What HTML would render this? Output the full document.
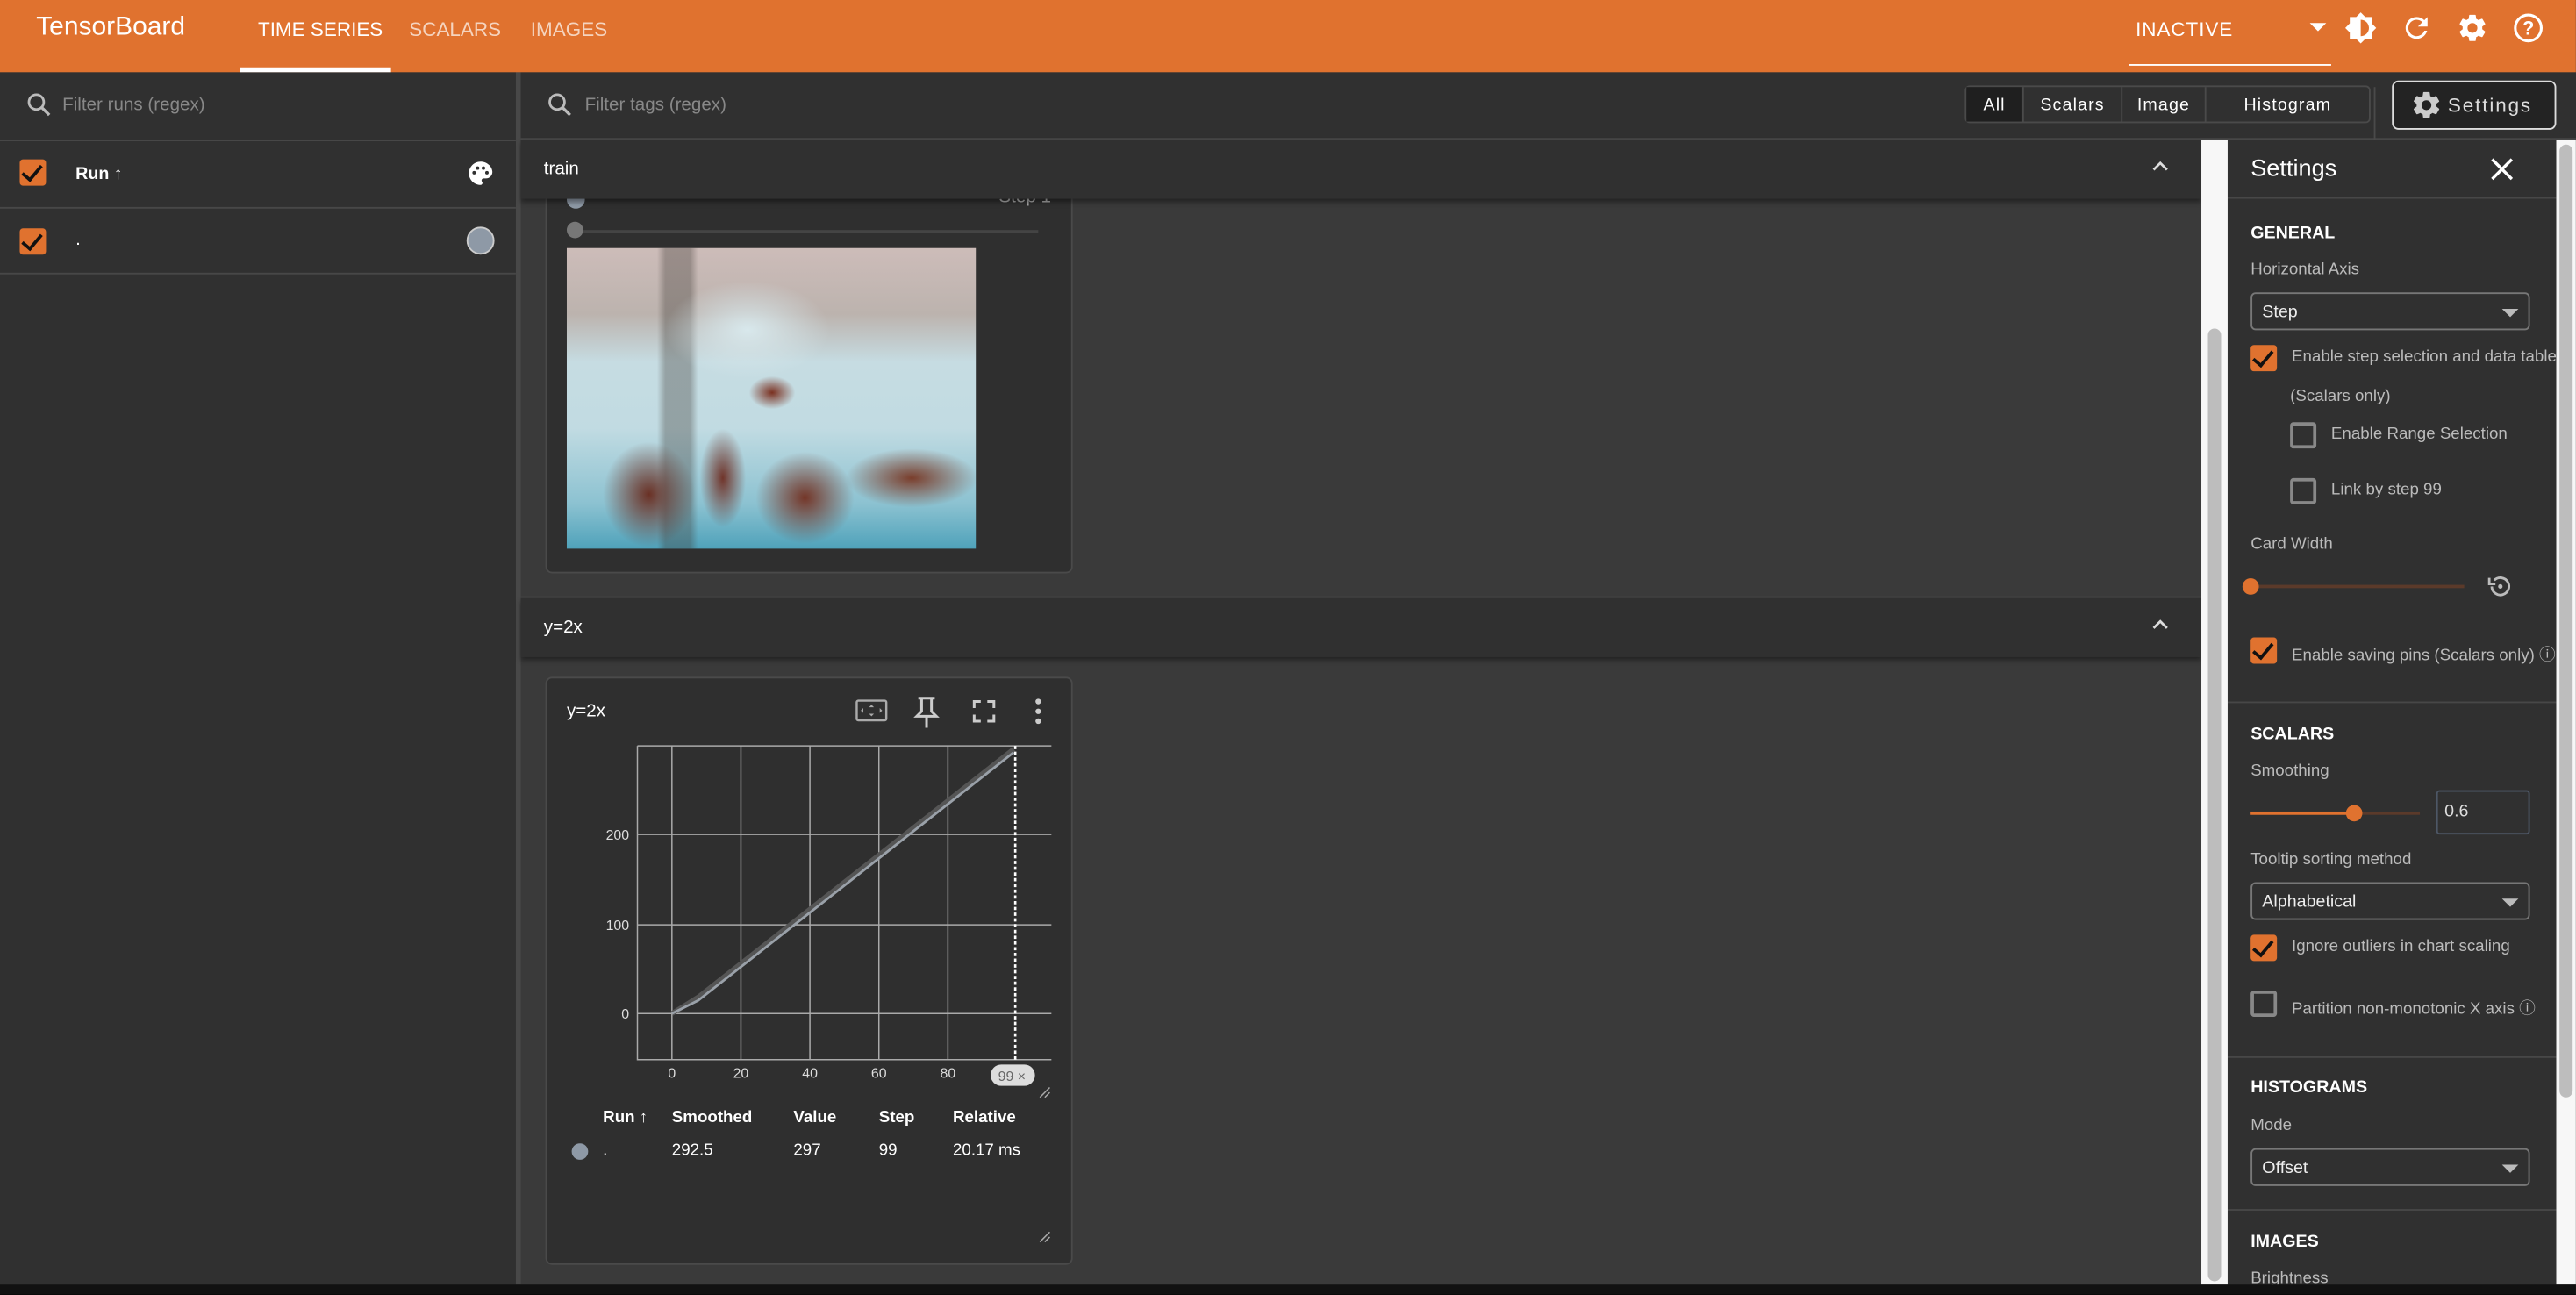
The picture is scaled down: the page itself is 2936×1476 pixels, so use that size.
<!DOCTYPE html>
<html><head><meta charset="utf-8"><style>
*{box-sizing:border-box;margin:0;padding:0}
html,body{width:2936px;height:1476px;overflow:hidden;background:#000}
#s{position:absolute;left:0;top:0;width:1568px;height:788px;transform:scale(1.8724);transform-origin:0 0;font-family:"Liberation Sans",sans-serif;color:#fff;background:#3a3a3a;overflow:hidden}
.a{position:absolute}
.hdr{left:0;top:0;width:1568px;height:44px;background:#e0722f}
.t{font-size:12px;white-space:nowrap}
.g{color:#aaa}
.cb{position:absolute;width:16px;height:16px;background:#e0722f;border-radius:2px}
.cb:after{content:"";position:absolute;left:4px;top:1px;width:5px;height:10px;border:solid #111;border-width:0 2px 2px 0;transform:rotate(40deg)}
.ub{position:absolute;width:16px;height:16px;border:2px solid #888;border-radius:2px}
.sel{position:absolute;border:1px solid #777;border-radius:3px;height:23px;width:170px;font-size:10.5px;padding:5px 6px;color:#eee}
.sel:after{content:"";position:absolute;right:6px;top:9px;border:5px solid transparent;border-top-color:#bbb}
.sh{font-size:10.5px;font-weight:bold;color:#fff}
.sl{font-size:10px;color:#bbb}
.line{position:absolute;background:#474747;height:1px}
</style></head><body><div id="s">
<div class="a hdr"></div>
<div class="a" style="left:22px;top:8px;font-size:16px">TensorBoard</div>
<div class="a t" style="left:157px;top:11px">TIME SERIES</div>
<div class="a t" style="left:249px;top:11px;color:#f5d4bf">SCALARS</div>
<div class="a t" style="left:323px;top:11px;color:#f5d4bf">IMAGES</div>
<div class="a" style="left:146px;top:41px;width:92px;height:3px;background:#fff"></div>
<div class="a t" style="left:1300px;top:11px;letter-spacing:.5px">INACTIVE</div>
<div class="a" style="left:1296px;top:39px;width:123px;height:1px;background:#fff"></div>
<div class="a" style="left:1406px;top:14px;border:5px solid transparent;border-top-color:#fff"></div>
<svg class="a" style="left:1427px;top:7px" width="20" height="20" viewBox="0 0 24 24"><path fill="#fff" d="M20 8.69V4h-4.69L12 .69 8.69 4H4v4.69L.69 12 4 15.31V20h4.69L12 23.31 15.31 20H20v-4.69L23.31 12 20 8.69zM12 18V6c3.31 0 6 2.69 6 6s-2.69 6-6 6z"/></svg>
<svg class="a" style="left:1461px;top:7px" width="20" height="20" viewBox="0 0 24 24"><path fill="#fff" d="M17.65 6.35A7.96 7.96 0 0 0 12 4a8 8 0 1 0 7.73 10h-2.08A6 6 0 1 1 12 6c1.66 0 3.14.69 4.22 1.78L13 11h7V4l-2.35 2.35z"/></svg>
<svg class="a" style="left:1495px;top:7px" width="20" height="20" viewBox="0 0 24 24"><path fill="#fff" d="M19.14 12.94a7.5 7.5 0 0 0 0-1.880l2.03-1.58a.5.5 0 0 0 .12-.61l-1.92-3.32a.5.5 0 0 0-.59-.22l-2.39.96a7 7 0 0 0-1.62-.94l-.36-2.54a.5.5 0 0 0-.48-.41h-3.840a.5.5 0 0 0-.47.41l-.36 2.54c-.59.24-1.13.57-1.62.94l-2.39-.96a.5.5 0 0 0-.59.22L2.74 8.87a.5.5 0 0 0 .12.61l2.03 1.58a7.5 7.5 0 0 0 0 1.88l-2.03 1.58a.5.5 0 0 0-.12.61l1.92 3.32c.12.22.37.29.59.22l2.39-.96c.5.38 1.03.7 1.62.94l.36 2.54c.05.24.24.41.48.41h3.84c.24 0 .44-.17.47-.41l.36-2.54c.59-.24 1.13-.56 1.62-.94l2.39.96c.22.08.47 0 .59-.22l1.92-3.32a.5.5 0 0 0-.12-.61l-2.01-1.58zM12 15.6a3.6 3.6 0 1 1 0-7.2 3.6 3.6 0 0 1 0 7.2z"/></svg>
<svg class="a" style="left:1529px;top:7px" width="20" height="20" viewBox="0 0 24 24"><circle cx="12" cy="12" r="9.5" fill="none" stroke="#fff" stroke-width="2"/><text x="12" y="17" text-anchor="middle" font-size="14" font-family="Liberation Sans" font-weight="bold" fill="#fff">?</text></svg>

<!-- left panel -->
<div class="a" style="left:0;top:44px;width:314px;height:738px;background:#303030"></div>
<div class="a" style="left:314px;top:44px;width:3px;height:738px;background:#484848"></div>
<svg class="a" style="left:15px;top:55px" width="18" height="18" viewBox="0 0 24 24"><circle cx="9.5" cy="9.5" r="6" fill="none" stroke="#bbb" stroke-width="2"/><path d="M14 14l6 6" stroke="#bbb" stroke-width="2.4"/></svg>
<div class="a t g" style="left:38px;top:58px;font-size:11px;color:#888">Filter runs (regex)</div>
<div class="line" style="left:0;top:85px;width:314px"></div>
<div class="cb" style="left:12px;top:97px"></div>
<div class="a" style="left:46px;top:100px;font-size:10.5px;font-weight:bold">Run ↑</div>
<svg class="a" style="left:284px;top:97px" width="17" height="17" viewBox="0 0 24 24"><path fill="#fff" d="M12 2C6.5 2 2 6.5 2 12s4.5 10 10 10c.9 0 1.7-.8 1.7-1.7 0-.4-.2-.8-.4-1.1-.3-.3-.4-.7-.4-1.1 0-.9.8-1.7 1.7-1.7h2c3.1 0 5.6-2.5 5.6-5.6C22 6 17.5 2 12 2zM6.5 13a1.5 1.5 0 1 1 0-3 1.5 1.5 0 0 1 0 3zm3-4a1.5 1.5 0 1 1 0-3 1.5 1.5 0 0 1 0 3zm5 0a1.5 1.5 0 1 1 0-3 1.5 1.5 0 0 1 0 3zm3 4a1.5 1.5 0 1 1 0-3 1.5 1.5 0 0 1 0 3z"/></svg>
<div class="line" style="left:0;top:126px;width:314px"></div>
<div class="cb" style="left:12px;top:139px"></div>
<div class="a" style="left:46px;top:140px;font-size:11px">.</div>
<div class="a" style="left:284px;top:138px;width:17px;height:17px;border-radius:50%;background:#8e99a6;border:1px solid #ccc"></div>
<div class="line" style="left:0;top:166px;width:314px"></div>

<!-- filter bar -->
<div class="a" style="left:317px;top:44px;width:1251px;height:41px;background:#303030;border-bottom:1px solid #474747"></div>
<svg class="a" style="left:332px;top:55px" width="18" height="18" viewBox="0 0 24 24"><circle cx="9.5" cy="9.5" r="6" fill="none" stroke="#bbb" stroke-width="2"/><path d="M14 14l6 6" stroke="#bbb" stroke-width="2.4"/></svg>
<div class="a t" style="left:356px;top:58px;font-size:11px;color:#888">Filter tags (regex)</div>
<div class="a" style="left:1196px;top:52px;width:247px;height:23px;border:1px solid #4a4a4a;border-radius:3px;display:flex;font-size:10.5px;letter-spacing:.6px">
<div style="width:34px;background:#1f1f1f;text-align:center;padding-top:5px">All</div>
<div style="width:60px;border-left:1px solid #4a4a4a;text-align:center;padding-top:5px">Scalars</div>
<div style="width:51px;border-left:1px solid #4a4a4a;text-align:center;padding-top:5px">Image</div>
<div style="flex:1;border-left:1px solid #4a4a4a;text-align:center;padding-top:5px">Histogram</div></div>
<div class="a" style="left:1445px;top:53px;width:1px;height:32px;background:#4a4a4a"></div>
<div class="a" style="left:1456px;top:49px;width:100px;height:30px;border:1px solid #ddd;border-radius:4px;background:#232323"></div>
<svg class="a" style="left:1467px;top:54px" width="20" height="20" viewBox="0 0 24 24"><path fill="#ccc" d="M19.14 12.94a7.5 7.5 0 0 0 0-1.88l2.03-1.58a.5.5 0 0 0 .12-.61l-1.920-3.32a.5.5 0 0 0-.59-.22l-2.39.96a7 7 0 0 0-1.62-.94l-.36-2.54a.5.5 0 0 0-.48-.41h-3.84a.5.5 0 0 0-.47.41l-.36 2.54c-.59.24-1.13.57-1.62.94l-2.39-.96a.5.5 0 0 0-.59.22L2.74 8.87a.5.5 0 0 0 .12.61l2.03 1.58a7.5 7.5 0 0 0 0 1.88l-2.03 1.58a.5.5 0 0 0-.12.61l1.92 3.32c.12.22.37.29.59.22l2.39-.96c.5.38 1.03.7 1.62.94l.36 2.54c.05.24.24.41.48.41h3.84c.24 0 .44-.17.47-.41l.36-2.54c.59-.24 1.13-.56 1.62-.94l2.39.96c.22.08.47 0 .59-.22l1.92-3.32a.5.5 0 0 0-.12-.61l-2.01-1.58zM12 15.6a3.6 3.6 0 1 1 0-7.2 3.6 3.6 0 0 1 0 7.2z"/></svg>
<div class="a" style="left:1490px;top:57px;font-size:12px;letter-spacing:1px;color:#ddd">Settings</div>

<!-- main content -->
<div class="a" style="left:332px;top:110px;width:321px;height:239px;background:#2f2f2f;border:1px solid #4a4a4a;border-radius:4px"></div>
<div class="a" style="left:345px;top:116px;width:11px;height:11px;border-radius:50%;background:#8e99a6"></div>
<div class="a g" style="left:608px;top:114px;font-size:11px">Step 1</div>
<div class="a" style="left:350px;top:140px;width:282px;height:2px;background:#444"></div>
<div class="a" style="left:345px;top:135px;width:10px;height:10px;border-radius:50%;background:#777"></div>
<div class="a" style="left:345px;top:151px;width:249px;height:183px;background:
radial-gradient(ellipse 14px 10px at 125px 88px,#7a3020,transparent),
radial-gradient(ellipse 28px 32px at 50px 150px,#6a3024,transparent),
radial-gradient(ellipse 14px 30px at 95px 140px,#70342a,transparent),
radial-gradient(ellipse 30px 28px at 145px 152px,#743628,transparent),
radial-gradient(ellipse 40px 18px at 210px 140px,#7a3e2c,transparent),
radial-gradient(ellipse 50px 30px at 110px 50px,#d8e8ec,transparent),
linear-gradient(90deg,transparent 0,transparent 55px,rgba(60,55,50,.35) 60px,rgba(60,55,50,.35) 75px,transparent 80px),
linear-gradient(180deg,#cdbcb9 0%,#bcb3ae 22%,#c6dce2 38%,#c1dbe2 60%,#8cc2d1 85%,#4fa2ba 100%)"></div>
<div class="a" style="left:317px;top:85px;width:1023px;height:36px;background:#303030;box-shadow:0 2px 3px rgba(0,0,0,.4)"></div>
<div class="a" style="left:331px;top:97px;font-size:11px">train</div>
<svg class="a" style="left:1308px;top:94px" width="14" height="14" viewBox="0 0 24 24"><path d="M5 16l7-7 7 7" fill="none" stroke="#ddd" stroke-width="2.5"/></svg>

<div class="a" style="left:317px;top:363px;width:1023px;height:1px;background:#4a4a4a"></div>
<div class="a" style="left:317px;top:364px;width:1023px;height:36px;background:#303030;box-shadow:0 2px 3px rgba(0,0,0,.4)"></div>
<div class="a" style="left:331px;top:376px;font-size:11px">y=2x</div>
<svg class="a" style="left:1308px;top:373px" width="14" height="14" viewBox="0 0 24 24"><path d="M5 16l7-7 7 7" fill="none" stroke="#ddd" stroke-width="2.5"/></svg>

<div class="a" style="left:332px;top:412px;width:321px;height:358px;background:#2f2f2f;border:1px solid #4a4a4a;border-radius:4px"></div>
<div class="a" style="left:345px;top:427px;font-size:11px">y=2x</div>
<svg class="a" style="left:520px;top:423px;overflow:visible" width="125" height="20">
<rect x="1.5" y="3.5" width="18" height="12" rx="1" fill="none" stroke="#aaa" stroke-width="1.3"/><path d="M10.5 6l-1.5 1.5h3zM10.5 13l-1.5-1.5h3zM4 9.5l1.5-1.5v3zM17 9.5l-1.5-1.5v3z" fill="#aaa"/>
<path d="M39 2h10M41 2v8l-3 3h12l-3-3V2M44 13v7" fill="none" stroke="#ccc" stroke-width="1.6"/>
<path d="M73 8V4h4M81 4h4v4M85 12v4h-4M77 16h-4v-4" fill="none" stroke="#ccc" stroke-width="1.6"/>
<circle cx="112" cy="4" r="1.7" fill="#ccc"/><circle cx="112" cy="10" r="1.7" fill="#ccc"/><circle cx="112" cy="16" r="1.7" fill="#ccc"/></svg>
<svg class="a" style="left:345px;top:450px" width="305" height="320" font-family="Liberation Sans" font-size="8.5">
<g stroke="#aaa" stroke-width=".8" fill="none"><path d="M43 4v191h252"/><path d="M64 4v191M106 4v191M148 4v191M190 4v191M232 4v191"/><path d="M43 58h252M43 113h252M43 167h252M43 4h252"/></g>
<path d="M273 4v191" stroke="#fff" stroke-width="1.4" stroke-dasharray="2 1.5" fill="none"/>
<path d="M64 167 L80 157 L272 6" stroke="#555" stroke-width="3" fill="none"/>
<path d="M64 167 L80 159 L272 8" stroke="#9aa1a9" stroke-width="1.5" fill="none"/>
<g text-anchor="end" fill="#ddd"><text x="38" y="61">200</text><text x="38" y="116">100</text><text x="38" y="170">0</text></g>
<g text-anchor="middle" fill="#ddd"><text x="64" y="206">0</text><text x="106" y="206">20</text><text x="148" y="206">40</text><text x="190" y="206">60</text><text x="232" y="206">80</text></g>
<rect x="258" y="198" width="27" height="13" rx="6.5" fill="#ddd"/><text x="271" y="208" text-anchor="middle" fill="#666">99 ×</text>
<path d="M288 218l6-6M291 218l3-3M288 306l6-6M291 306l3-3" stroke="#aaa" stroke-width=".8"/>
</svg>
<div class="a" style="left:367px;top:675px;font-size:10px;font-weight:bold;white-space:nowrap">Run ↑</div>
<div class="a" style="left:409px;top:675px;font-size:10px;font-weight:bold">Smoothed</div>
<div class="a" style="left:483px;top:675px;font-size:10px;font-weight:bold">Value</div>
<div class="a" style="left:535px;top:675px;font-size:10px;font-weight:bold">Step</div>
<div class="a" style="left:580px;top:675px;font-size:10px;font-weight:bold">Relative</div>
<div class="a" style="left:348px;top:696px;width:10px;height:10px;border-radius:50%;background:#8e99a6"></div>
<div class="a" style="left:367px;top:695px;font-size:10px">.</div>
<div class="a" style="left:409px;top:695px;font-size:10px">292.5</div>
<div class="a" style="left:483px;top:695px;font-size:10px">297</div>
<div class="a" style="left:535px;top:695px;font-size:10px">99</div>
<div class="a" style="left:580px;top:695px;font-size:10px">20.17 ms</div>

<!-- scrollbars -->
<div class="a" style="left:1340px;top:85px;width:16px;height:697px;background:#f7f7f7"></div>
<div class="a" style="left:1344px;top:200px;width:8px;height:580px;border-radius:4px;background:#bdbdbd"></div>
<div class="a" style="left:1556px;top:85px;width:12px;height:697px;background:#f7f7f7"></div>
<div class="a" style="left:1558px;top:88px;width:8px;height:580px;border-radius:4px;background:#bdbdbd"></div>

<!-- settings panel -->
<div class="a" style="left:1356px;top:85px;width:200px;height:697px;background:#303030;overflow:hidden">
<div class="a" style="left:14px;top:10px;font-size:14.5px">Settings</div>
<svg class="a" style="left:160px;top:11px" width="14" height="14"><path d="M1 1l12 12M13 1L1 13" stroke="#fff" stroke-width="1.8"/></svg>
<div class="line" style="left:0;top:35px;width:200px"></div>
<div class="a sh" style="left:14px;top:51px">GENERAL</div>
<div class="a sl" style="left:14px;top:74px">Horizontal Axis</div>
<div class="sel" style="left:14px;top:93px">Step</div>
<div class="cb" style="left:14px;top:125px"></div>
<div class="a sl" style="left:39px;top:127px;white-space:nowrap">Enable step selection and data table</div>
<div class="a sl" style="left:38px;top:151px">(Scalars only)</div>
<div class="ub" style="left:38px;top:172px"></div>
<div class="a sl" style="left:63px;top:174px;white-space:nowrap">Enable Range Selection</div>
<div class="ub" style="left:38px;top:206px"></div>
<div class="a sl" style="left:63px;top:208px">Link by step 99</div>
<div class="a sl" style="left:14px;top:241px">Card Width</div>
<div class="a" style="left:14px;top:271px;width:130px;height:2px;background:#5b3a2a"></div>
<div class="a" style="left:9px;top:267px;width:10px;height:10px;border-radius:50%;background:#e0722f"></div>
<svg class="a" style="left:157px;top:263px" width="18" height="18" viewBox="0 0 24 24"><path d="M5 12a7 7 0 1 0 2-5" fill="none" stroke="#bbb" stroke-width="2"/><path d="M3 5v5h5" fill="none" stroke="#bbb" stroke-width="2"/><circle cx="12" cy="12" r="1.8" fill="#bbb"/></svg>
<div class="cb" style="left:14px;top:303px"></div>
<div class="a sl" style="left:39px;top:305px;white-space:nowrap">Enable saving pins (Scalars only) ⓘ</div>
<div class="line" style="left:0;top:342px;width:200px"></div>
<div class="a sh" style="left:14px;top:356px">SCALARS</div>
<div class="a sl" style="left:14px;top:379px">Smoothing</div>
<div class="a" style="left:14px;top:409px;width:103px;height:2px;background:#5b3a2a"></div>
<div class="a" style="left:14px;top:409px;width:63px;height:2px;background:#e0722f"></div>
<div class="a" style="left:72px;top:405px;width:10px;height:10px;border-radius:50%;background:#e0722f"></div>
<div class="a" style="left:127px;top:396px;width:57px;height:27px;border:1px solid #4d5766;border-radius:2px;font-size:10.5px;padding:6px 4px;color:#ddd">0.6</div>
<div class="a sl" style="left:14px;top:433px;white-space:nowrap">Tooltip sorting method</div>
<div class="sel" style="left:14px;top:452px">Alphabetical</div>
<div class="cb" style="left:14px;top:484px"></div>
<div class="a sl" style="left:39px;top:486px;white-space:nowrap">Ignore outliers in chart scaling</div>
<div class="ub" style="left:14px;top:518px"></div>
<div class="a sl" style="left:39px;top:520px;white-space:nowrap">Partition non-monotonic X axis ⓘ</div>
<div class="line" style="left:0;top:558px;width:200px"></div>
<div class="a sh" style="left:14px;top:571px">HISTOGRAMS</div>
<div class="a sl" style="left:14px;top:595px">Mode</div>
<div class="sel" style="left:14px;top:614px">Offset</div>
<div class="line" style="left:0;top:651px;width:200px"></div>
<div class="a sh" style="left:14px;top:665px">IMAGES</div>
<div class="a sl" style="left:14px;top:688px">Brightness</div>
</div>
<div class="a" style="left:0;top:782px;width:1568px;height:6px;background:#111"></div>
</div></body></html>
